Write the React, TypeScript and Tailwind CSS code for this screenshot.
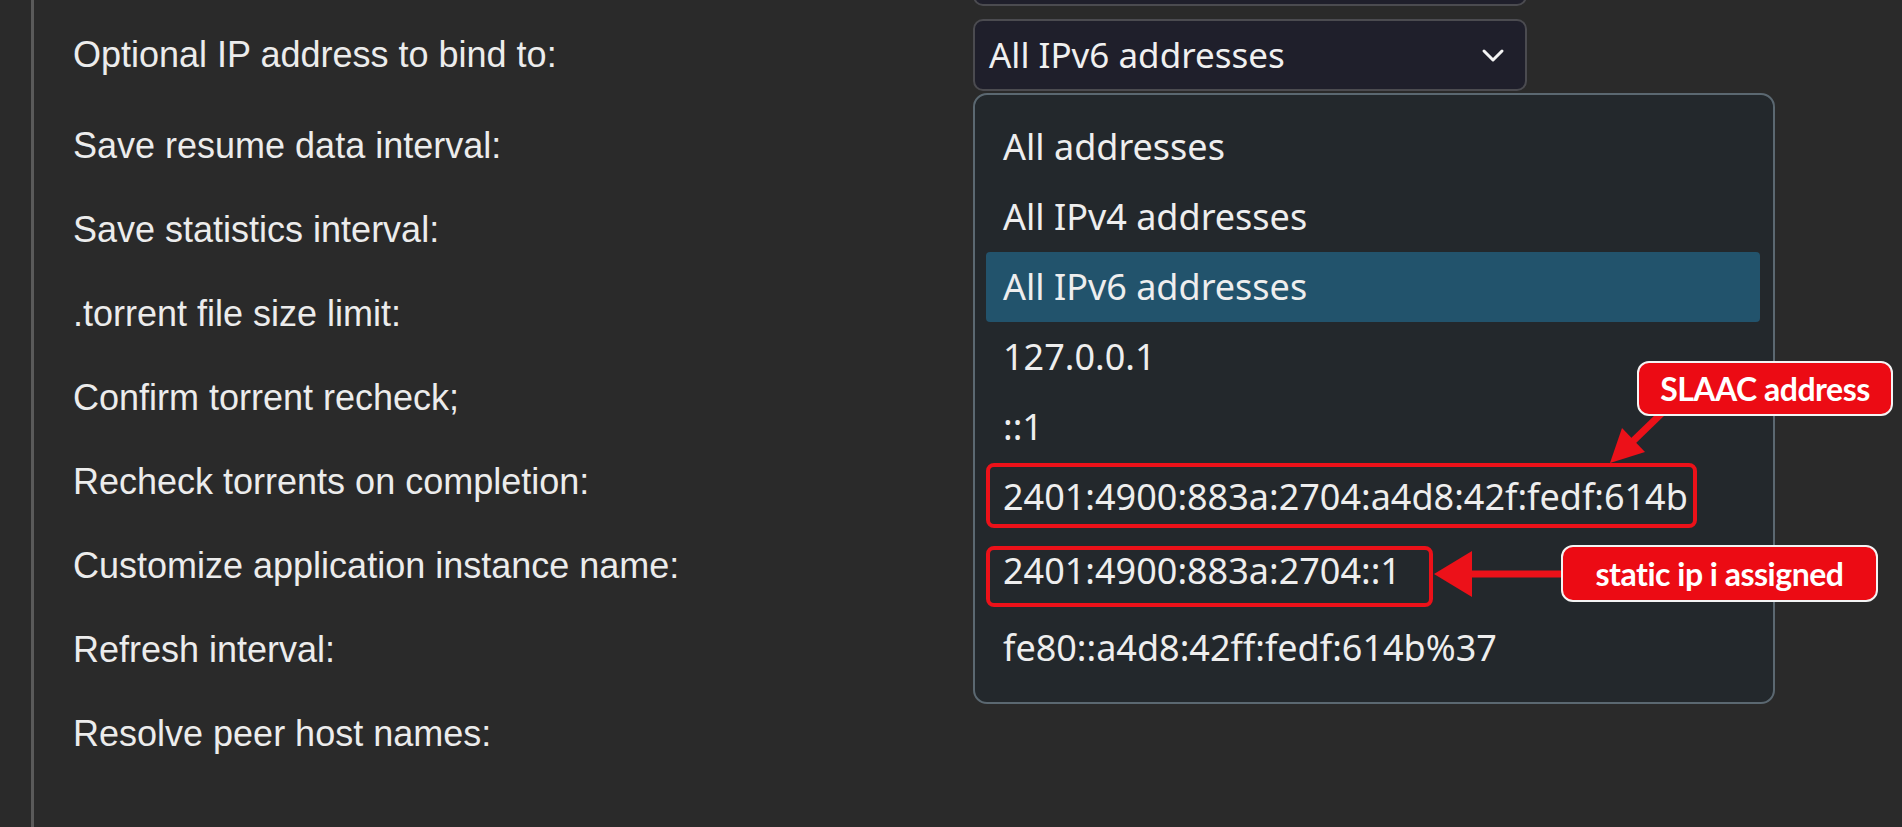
import React from "react";

const labels = [
  "Save resume data interval:",
  "Save statistics interval:",
  ".torrent file size limit:",
  "Confirm torrent recheck;",
  "Recheck torrents on completion:",
  "Customize application instance name:",
  "Refresh interval:",
  "Resolve peer host names:",
];

const items: { text: string; h: string; active?: boolean }[] = [
  { text: "All addresses", h: "h-[70px]" },
  { text: "All IPv4 addresses", h: "h-[70px]" },
  { text: "All IPv6 addresses", h: "h-[70px]", active: true },
  { text: "127.0.0.1", h: "h-[70px]" },
  { text: "::1", h: "h-[70px]" },
  { text: "2401:4900:883a:2704:a4d8:42f:fedf:614b", h: "h-[70px]" },
  { text: "2401:4900:883a:2704::1", h: "h-[77px]" },
  { text: "fe80::a4d8:42ff:fedf:614b%37", h: "h-[77px]" },
];

export default function App() {
  return (
    <div className="relative flex w-[1902px] h-[827px] overflow-hidden bg-[#2a2a2a]">
      <div className="w-[31px] shrink-0" />
      <div className="w-[3px] shrink-0 h-full bg-[#5a5a5a]" />
      {/* labels */}
      <div className="w-[939px] shrink-0 pl-[39px] flex flex-col text-[36px] text-[#ececec] font-['Liberation_Sans',Arial,sans-serif]">
        <div className="mt-[19px] h-[72px] flex items-center">Optional IP address to bind to:</div>
        <div className="h-[13px]" />
        {labels.map((l) => (
          <div key={l} className="h-[84px] flex items-center">
            {l}
          </div>
        ))}
      </div>
      {/* controls */}
      <div className="w-[802px] shrink-0 flex flex-col font-['Noto_Sans',sans-serif]">
        <div className="-mt-[44px] h-[50px] w-[554px] rounded-[10px] border-2 border-[#4b4b50] bg-[#1f1f2b]" />
        <div className="mt-[13px] h-[72px] w-[554px] rounded-[10px] border-2 border-[#4b4b50] bg-[#1f1f2b] flex items-center justify-between pl-[14px] pr-[20px] text-[35px] text-[#f0f0f0]">
          <span>All IPv6 addresses</span>
          <svg width="24" height="16" viewBox="0 0 24 16" className="mt-[2px]">
            <polyline points="3,3 12,12 21,3" fill="none" stroke="#f4f4f4" strokeWidth="3" strokeLinecap="round" strokeLinejoin="round" />
          </svg>
        </div>
        <div className="relative mt-[2px] h-[611px] w-[802px] rounded-[14px] border-2 border-[#5b6871] bg-[#23282c] pt-[17px] pl-[11px] pr-[13px] text-[36px] text-[#eeeeee]">
          {items.map((it) => (
            <div
              key={it.text}
              className={`${it.h} flex items-center pl-[17px] rounded-[4px] ${it.active ? "bg-[#22536c]" : ""}`}
            >
              {it.text}
            </div>
          ))}
          <div className="absolute left-[11px] top-[368px] w-[711px] h-[65px] rounded-[8px] border-[4px] border-[#ec1119]" />
          <div className="absolute left-[11px] top-[451px] w-[447px] h-[61px] rounded-[8px] border-[4px] border-[#ec1119]" />
        </div>
      </div>

      {/* annotation arrows */}
      <svg className="absolute left-0 top-0 pointer-events-none" width="1902" height="827" viewBox="0 0 1902 827">
        <line x1="1662" y1="413" x2="1630" y2="444" stroke="#ec1119" strokeWidth="7" />
        <polygon points="1610,463 1645,452 1622,428" fill="#ec1119" />
        <line x1="1562" y1="574" x2="1462" y2="574" stroke="#ec1119" strokeWidth="7" />
        <polygon points="1434,574 1472,551 1472,597" fill="#ec1119" />
      </svg>

      {/* callouts */}
      <div className="absolute left-[1637px] top-[361px] w-[256px] h-[55px] rounded-[12px] border-2 border-[#f4f4f4] bg-[#ec0b14] flex items-center justify-center text-white font-bold text-[32px] tracking-[-0.5px] font-['Lato',sans-serif]">
        SLAAC address
      </div>
      <div className="absolute left-[1561px] top-[545px] w-[317px] h-[57px] rounded-[12px] border-2 border-[#f4f4f4] bg-[#ec0b14] flex items-center justify-center text-white font-bold text-[32px] tracking-[-0.5px] font-['Lato',sans-serif]">
        static ip i assigned
      </div>
    </div>
  );
}
